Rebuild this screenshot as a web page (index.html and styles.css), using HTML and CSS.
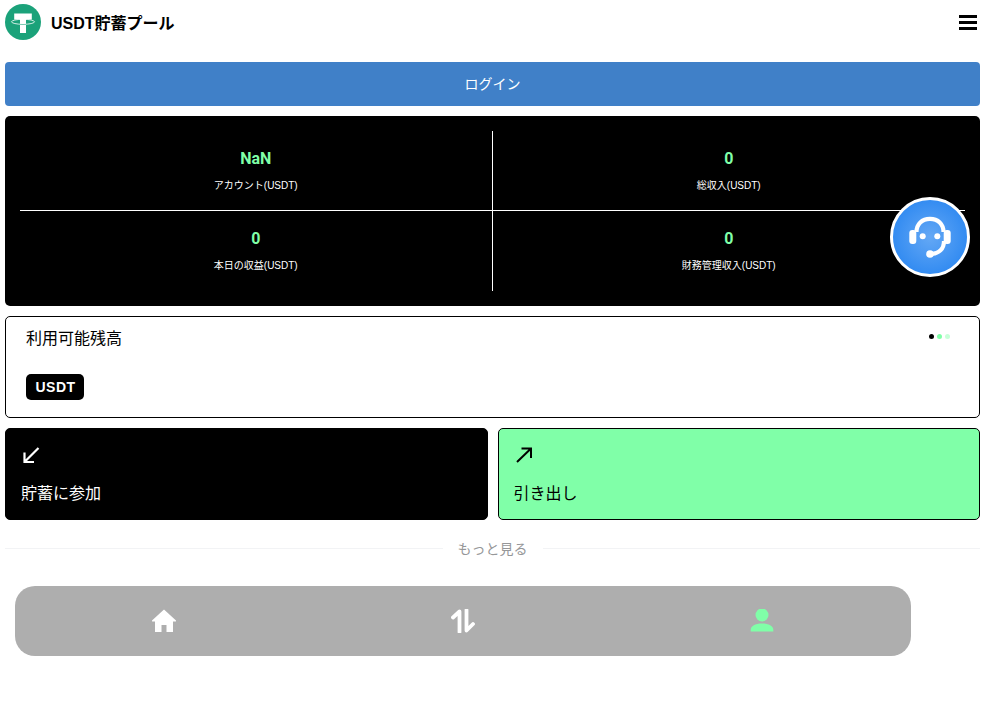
FILE: index.html
```html
<!DOCTYPE html>
<html lang="ja">
<head>
    <meta charset="utf-8" />
    <title>USDT貯蓄プール</title>
    <link rel="stylesheet" href="styles.css">
</head>
<body>
    <div class="page">
        <header class="top">
            <div class="brand">
                <svg class="logo" viewBox="0 0 36 36">
                    <circle cx="18" cy="18" r="18" fill="#1ba27a"/>
                    <path d="M9.200 9.500h17.600v6h-5.800V29h-6V15.500H9.200z" fill="#fff"/>
                    <ellipse cx="18" cy="17.800" rx="11.500" ry="2.500" fill="none" stroke="#fff" stroke-width=".8"/>
                    <path d="M15 20.400c1 .1 2 .1 3 .1s2 0 3-.1" fill="none" stroke="#1ba27a" stroke-width=".6"/>
                </svg>
                <span class="brand-name">USDT貯蓄プール</span>
            </div>
            <div class="burger"><span></span><span></span><span></span></div>
        </header>

        <div class="login">ログイン</div>

        <section class="stats">
            <div class="stat stat-tl">
                <div class="stat-value">NaN</div>
                <div class="stat-label">アカウント(USDT)</div>
            </div>
            <div class="stat stat-tr">
                <div class="stat-value">0</div>
                <div class="stat-label">総収入(USDT)</div>
            </div>
            <div class="stat stat-bl">
                <div class="stat-value">0</div>
                <div class="stat-label">本日の収益(USDT)</div>
            </div>
            <div class="stat">
                <div class="stat-value">0</div>
                <div class="stat-label">財務管理収入(USDT)</div>
            </div>
        </section>

        <section class="balance">
            <div class="balance-head">
                <span class="balance-title">利用可能残高</span>
                <div class="dots"><i class="dot-a"></i><i class="dot-b"></i><i class="dot-c"></i></div>
            </div>
            <span class="coin">USDT</span>
        </section>

        <section class="actions">
            <div class="action action-dark">
                <svg class="arrow" viewBox="0 0 20 20"><path d="M17.500 3 3.500 17M3.500 7.500V17H13" fill="none" stroke="#fff" stroke-width="2.200"/></svg>
                <div class="action-text">貯蓄に参加</div>
            </div>
            <div class="action action-green">
                <svg class="arrow" viewBox="0 0 20 20"><path d="M3 17 17 3.500M7.500 3.500H17V13" fill="none" stroke="#000" stroke-width="2"/></svg>
                <div class="action-text">引き出し</div>
            </div>
        </section>

        <div class="more"><span>もっと見る</span></div>

        <nav class="nav">
            <svg class="nav-icon" viewBox="0 0 24 24"><path d="M12 .5 0 11.500c-.4.6 0 1 .6 1h2.400V23h6.500v-7h5v7H21V12.500h2.400c.6 0 1-.4.6-1z" fill="#fff"/></svg>
            <svg class="nav-icon" viewBox="0 0 24 24"><path d="M8.500 23V2.500L2 8.500M15.500 1v20.500L22 15" fill="none" stroke="#fff" stroke-width="3.800" stroke-linecap="round" stroke-linejoin="round"/></svg>
            <svg class="nav-icon" viewBox="0 0 24 24"><circle cx="12" cy="6" r="6.500" fill="#80ffa8"/><path d="M.7 22.500v-1.500C.7 17 5 14.500 12 14.500s11.300 2.500 11.300 6.500v1.500z" fill="#80ffa8"/></svg>
        </nav>
    </div>

    <div class="support">
        <svg viewBox="0 0 48 48" width="48" height="48">
            <path d="M10.500 19C10.500 11 16 5.800 24 5.800S37.500 11 37.500 19M38 28c0 8-5 12.500-13 13" fill="none" stroke="#fff" stroke-width="4.200"/>
            <rect x="3.300" y="17" width="7" height="14" rx="3" fill="#fff"/>
            <rect x="37.700" y="17" width="7" height="14" rx="3" fill="#fff"/>
            <circle cx="16.700" cy="23.300" r="3" fill="#fff"/>
            <circle cx="31.300" cy="23.300" r="3" fill="#fff"/>
            <circle cx="24" cy="41" r="3.800" fill="#fff"/>
        </svg>
    </div>
</body>
</html>
```

FILE: styles.css
```css
*
{
    box-sizing: border-box;
    margin: 0;
    padding: 0;
}

body
{
    background: #fff;
    color: #000;
    font-family: "Liberation Sans", "Noto Sans CJK JP", sans-serif;
    position: relative;
}

.page
{
    width: 985px;
    padding: 0 5px;
}

.top
{
    display: flex;
    align-items: center;
    justify-content: space-between;
    height: 44px;
    margin-bottom: 18px;
}

.brand
{
    display: flex;
    align-items: center;
    gap: 10px;
}

.logo
{
    width: 36px;
    height: 36px;
}

.brand-name
{
    font-size: 16px;
    font-weight: bold;
}

.burger
{
    display: flex;
    flex-direction: column;
    gap: 3px;
    width: 18px;
    margin-right: 3px;
    margin-top: 1px;
}

.burger span
{
    display: block;
    height: 3px;
    background: #000;
}

.login
{
    height: 44px;
    line-height: 44px;
    margin-bottom: 10px;
    background: #4080c8;
    border-radius: 4px;
    color: #fff;
    font-size: 14px;
    text-align: center;
}

.stats
{
    display: grid;
    grid-template-columns: 1fr 1fr;
    grid-template-rows: 80px 80px;
    padding: 15px;
    margin-bottom: 10px;
    background: #000;
    border-radius: 5px;
}

.stat
{
    display: flex;
    flex-direction: column;
    align-items: center;
    padding-top: 18px;
}

.stat-tl
{
    border-right: 1px solid #fff;
    border-bottom: 1px solid #fff;
}

.stat-tr
{
    border-bottom: 1px solid #fff;
}

.stat-bl
{
    border-right: 1px solid #fff;
}

.stat-value
{
    height: 20px;
    line-height: 20px;
    color: #80ffa8;
    font-family: Roboto, sans-serif;
    font-size: 16px;
    font-weight: bold;
}

.stat-label
{
    margin-top: 10px;
    color: #fff;
    font-size: 10px;
    line-height: 14px;
}

.balance
{
    height: 102px;
    padding: 9px 20px 0;
    margin-bottom: 10px;
    border: 1px solid #000;
    border-radius: 5px;
}

.balance-head
{
    display: flex;
    align-items: center;
    justify-content: space-between;
    height: 22px;
    margin-bottom: 26px;
}

.balance-title
{
    font-size: 16px;
}

.dots
{
    display: flex;
    gap: 3px;
    margin-right: 9px;
    margin-top: -2px;
}

.dots i
{
    display: block;
    width: 5px;
    height: 5px;
    border-radius: 50%;
}

.dot-a
{
    background: #000;
}

.dot-b
{
    background: #80ffa8;
}

.dot-c
{
    background: #c8ffd8;
}

.coin
{
    display: inline-block;
    width: 58px;
    height: 26px;
    line-height: 26px;
    padding-left: 1px;
    background: #000;
    border-radius: 5px;
    color: #fff;
    font-size: 14px;
    font-weight: bold;
    letter-spacing: .5px;
    text-align: center;
}

.actions
{
    display: grid;
    grid-template-columns: 1fr 1fr;
    gap: 10px;
}

.action
{
    height: 92px;
    padding: 16px 15px 0;
    border: 1px solid #000;
    border-radius: 5px;
}

.action-dark
{
    background: #000;
    color: #fff;
}

.action-green
{
    background: #80ffa8;
    color: #000;
}

.arrow
{
    display: block;
    width: 20px;
    height: 20px;
}

.action-text
{
    margin-top: 17px;
    font-size: 16px;
    line-height: 24px;
}

.more
{
    display: flex;
    align-items: center;
    gap: 15px;
    height: 20px;
    margin: 18px 0 28px;
    color: #969799;
    font-size: 14px;
}

.more::before, .more::after
{
    content: "";
    flex: 1;
    height: 1px;
    background: #f2f3f5;
}

.nav
{
    display: grid;
    grid-template-columns: 1fr 1fr 1fr;
    justify-items: center;
    align-items: center;
    width: 896px;
    height: 70px;
    margin-left: 10px;
    background: #aeaeae;
    border-radius: 20px;
}

.nav-icon
{
    width: 24px;
    height: 24px;
    margin-top: -1px;
}

.support
{
    position: absolute;
    top: 197px;
    left: 890px;
    display: flex;
    align-items: center;
    justify-content: center;
    width: 80px;
    height: 80px;
    background: radial-gradient(circle, #64a8f5, #1f80f0);
    border: 3px solid #fff;
    border-radius: 50%;
}
```
